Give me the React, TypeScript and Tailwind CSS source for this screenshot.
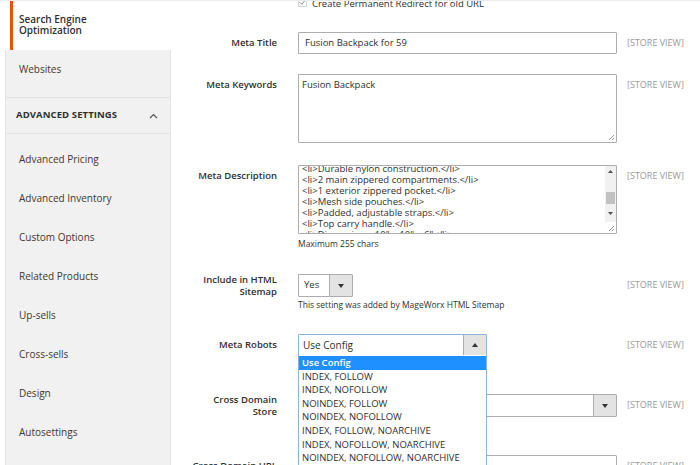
import React from 'react'

const font = { fontFamily: '"Open Sans", "Liberation Sans", sans-serif' }

const navItems = [
  'Advanced Pricing',
  'Advanced Inventory',
  'Custom Options',
  'Related Products',
  'Up-sells',
  'Cross-sells',
  'Design',
  'Autosettings',
]

const robots = [
  'Use Config',
  'INDEX, FOLLOW',
  'INDEX, NOFOLLOW',
  'NOINDEX, FOLLOW',
  'NOINDEX, NOFOLLOW',
  'INDEX, FOLLOW, NOARCHIVE',
  'INDEX, NOFOLLOW, NOARCHIVE',
  'NOINDEX, NOFOLLOW, NOARCHIVE',
  'NOINDEX, FOLLOW, NOARCHIVE',
]

const description = [
  '<li>Durable nylon construction.</li>',
  '<li>2 main zippered compartments.</li>',
  '<li>1 exterior zippered pocket.</li>',
  '<li>Mesh side pouches.</li>',
  '<li>Padded, adjustable straps.</li>',
  '<li>Top carry handle.</li>',
  '<li>Dimensions: 10" x 10" x 6"</li>',
]

function Resize() {
  return (
    <svg className="absolute right-[1px] bottom-[1px]" width="8" height="8" viewBox="0 0 8 8">
      <path d="M7 2 L2 7 M7 5 L5 7" stroke="#9a9a9a" strokeWidth="1" />
    </svg>
  )
}

function Arrow({ up }: { up?: boolean }) {
  return (
    <svg width="6" height="4" viewBox="0 0 6 4">
      <path d={up ? 'M0 4 L3 0 L6 4 Z' : 'M0 0 L6 0 L3 4 Z'} fill="#333" />
    </svg>
  )
}

function Row({
  label,
  twoLine,
  mt,
  children,
}: {
  label: React.ReactNode
  twoLine?: boolean
  mt: string
  children: React.ReactNode
}) {
  return (
    <div className={`flex ${mt}`}>
      <div
        className={`w-[106px] shrink-0 text-right text-[9.5px] font-semibold text-[#303030] ${
          twoLine ? 'leading-[12px] pt-0' : 'leading-[14px] pt-[4px]'
        }`}
      >
        {label}
      </div>
      <div className="ml-[21px] w-[319px] shrink-0">{children}</div>
      <div className="ml-[10px] pt-[4px] text-[9px] leading-[14px] text-[#9a9a9a]">[STORE VIEW]</div>
    </div>
  )
}

export default function App() {
  return (
    <div className="h-[465px] w-[700px] overflow-hidden bg-white flex border-t border-[#ececec]" style={font}>
      {/* Sidebar */}
      <div className="w-[171px] shrink-0 flex flex-col pl-[5px]">
        <div className="h-[49px] ml-[5px] border-l-[3px] border-[#eb5202] bg-white pl-[6px] pt-[13px] text-[10px] leading-[11px] font-semibold text-[#303030]">
          Search Engine
          <br />
          Optimization
        </div>
        <div className="flex-1 bg-[#f1f1f1] border-x border-[#e3e3e3]">
          <div className="h-[48px] border-b border-[#e3e3e3] pl-[13px] pt-[12px] text-[10px] leading-[14px] text-[#41362f]">
            Websites
          </div>
          <div className="h-[36px] border-b border-[#e3e3e3] pl-[10px] pr-[12px] flex items-center justify-between">
            <span className="text-[9.5px] font-bold text-[#303030] tracking-[0.1px]">ADVANCED SETTINGS</span>
            <svg width="9" height="6" viewBox="0 0 9 6">
              <path d="M1 5 L4.5 1.5 L8 5" fill="none" stroke="#555" strokeWidth="1.2" />
            </svg>
          </div>
          <div className="pt-[6px]">
            {navItems.map((n) => (
              <div key={n} className="h-[39px] flex items-center pl-[13px] text-[10px] text-[#41362f]">
                {n}
              </div>
            ))}
          </div>
        </div>
      </div>

      {/* Main */}
      <div className="flex-1 relative">
        <div className="flex -mt-[4px]">
          <div className="ml-[127px] flex items-center gap-[5px] h-[14px]">
            <svg width="9" height="9" viewBox="0 0 9 9" className="-mt-[4px]">
              <rect x="0.5" y="0.5" width="8" height="8" fill="#fff" stroke="#d4d4d4" />
              <path d="M2 4.5 L3.8 6.3 L7 2.5" fill="none" stroke="#8a8a8a" strokeWidth="1" />
            </svg>
            <span className="text-[9.5px] leading-[14px] text-[#303030]">Create Permanent Redirect for old URL</span>
          </div>
        </div>

        <Row label="Meta Title" mt="mt-[21px]">
          <div className="h-[22px] border border-[#adadad] rounded-[1px] pl-[6px] flex items-center text-[9.5px] text-[#303030]">
            Fusion Backpack for 59
          </div>
        </Row>

        <Row label="Meta Keywords" mt="mt-[20px]">
          <div className="relative h-[69px] border border-[#adadad] rounded-[1px] pl-[3px] pt-[3px] text-[9.5px] leading-[14px] text-[#303030]">
            Fusion Backpack
            <Resize />
          </div>
        </Row>

        <Row label="Meta Description" mt="mt-[22px]">
          <div className="relative h-[69px] border border-[#adadad] rounded-[1px] overflow-hidden">
            <div className="-mt-[3px] pl-[3px] pr-[14px] text-[9.5px] leading-[11px] text-[#303030] whitespace-pre">
              {description.join('\n')}
            </div>
            <div className="absolute right-0 top-0 bottom-[11px] w-[11px] bg-[#f1f1f1] flex flex-col items-center">
              <div className="h-[11px] flex items-center">
                <svg width="5" height="3" viewBox="0 0 5 3"><path d="M0 3 L2.5 0 L5 3 Z" fill="#505050" /></svg>
              </div>
              <div className="mt-[15px] h-[12px] w-[9px] bg-[#c1c1c1]" />
              <div className="mt-[4px] h-[11px] flex items-center">
                <svg width="5" height="3" viewBox="0 0 5 3"><path d="M0 0 L5 0 L2.5 3 Z" fill="#505050" /></svg>
              </div>
            </div>
            <div className="absolute right-0 bottom-0 w-[11px] h-[11px] bg-white" />
            <Resize />
          </div>
          <div className="mt-[4px] text-[8.5px] leading-[12px] text-[#303030]">Maximum 255 chars</div>
        </Row>

        <Row
          label={
            <>
              Include in HTML
              <br />
              Sitemap
            </>
          }
          twoLine
          mt="mt-[24px]"
        >
          <div className="w-[55px] h-[23px] border border-[#adadad] rounded-[1px] flex">
            <div className="flex-1 pl-[5px] flex items-center text-[9.5px] text-[#303030]">Yes</div>
            <div className="w-[23px] bg-[#e3e3e3] border-l border-[#adadad] flex items-center justify-center">
              <Arrow />
            </div>
          </div>
          <div className="mt-[2px] text-[8.5px] leading-[12px] text-[#303030]">
            This setting was added by MageWorx HTML Sitemap
          </div>
        </Row>

        <Row label="Meta Robots" mt="mt-[23px]">
          <div className="w-[189px] h-[22px] border border-[#8ab4df] rounded-[1px] flex">
            <div className="flex-1 pl-[4px] flex items-center text-[10px] text-[#303030]">Use Config</div>
            <div className="w-[23px] bg-[#e3e3e3] border-l border-[#adadad] flex items-center justify-center">
              <Arrow up />
            </div>
          </div>
        </Row>

        <Row
          label={
            <>
              Cross Domain
              <br />
              Store
            </>
          }
          twoLine
          mt="mt-[38px]"
        >
          <div className="h-[23px] border border-[#adadad] rounded-[1px] flex">
            <div className="flex-1" />
            <div className="w-[23px] bg-[#e3e3e3] border-l border-[#adadad] flex items-center justify-center">
              <Arrow />
            </div>
          </div>
        </Row>

        <Row label="Cross Domain URL" mt="mt-[37px]">
          <div className="h-[22px] border border-[#adadad] rounded-[1px]" />
        </Row>

        {/* Open dropdown of Meta Robots */}
        <div className="absolute left-[127px] top-[354px] w-[189px] bg-white border border-[#8ab4df] border-t-0 pt-[1px]">
          {robots.map((r, i) => (
            <div
              key={r}
              className={`h-[13.6px] pl-[3px] text-[9.5px] leading-[13.6px] ${
                i === 0 ? 'bg-[#1e90ff] text-white font-semibold' : 'text-[#303030]'
              }`}
            >
              {r}
            </div>
          ))}
        </div>
      </div>
    </div>
  )
}
